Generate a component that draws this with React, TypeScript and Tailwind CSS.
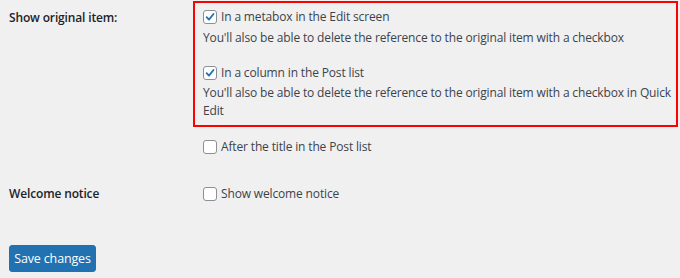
import React from "react";

function Box({ checked }: { checked?: boolean }) {
  return (
    <span className="flex h-[14px] w-[14px] shrink-0 items-center justify-center rounded-[3px] border border-[#8c8f94] bg-white">
      {checked && (
        <svg width="14" height="14" viewBox="0 0 20 20" className="block">
          <path d="M4.4 10.4 L8.3 14.4 L15.8 5" fill="none" stroke="#2271b1" strokeWidth="3" strokeLinecap="round" strokeLinejoin="round" />
        </svg>
      )}
    </span>
  );
}

function Check({ label, checked }: { label: string; checked?: boolean }) {
  return (
    <label className="flex h-[20px] items-center gap-[4px] text-[#3c434a]">
      <Box checked={checked} />
      <span>{label}</span>
    </label>
  );
}

export default function App() {
  return (
    <div
      className="h-[278px] w-[680px] overflow-hidden bg-[#f0f0f1] text-[12px] leading-[18px] tracking-[-0.15px] text-[#3c434a]"
      style={{ fontFamily: '"Segoe UI", "Open Sans", "Noto Sans", sans-serif' }}
    >
      <div className="flex pt-[1px]">
        <div className="w-[193px] shrink-0 pl-[9px] pt-[7px] font-semibold leading-[20px] text-[#1d2327]">
          Show original item:
        </div>
        <div className="flex flex-col">
          <div className="w-[485px] border-2 border-[#ff0000] pb-[5px] pl-[8px] pt-[2px]">
            <div className="pt-[2px]">
              <Check label="In a metabox in the Edit screen" checked />
            </div>
            <p className="mt-[2px]">You'll also be able to delete the reference to the original item with a checkbox</p>
            <div className="mt-[16px]">
              <Check label="In a column in the Post list" checked />
            </div>
            <p className="mt-[1px]">
              You'll also be able to delete the reference to the original item with a checkbox in Quick Edit
            </p>
          </div>
          <div className="mt-[10px] pl-[10px]">
            <Check label="After the title in the Post list" />
          </div>
        </div>
      </div>
      <div className="mt-[27px] flex">
        <div className="w-[193px] shrink-0 pl-[9px] font-semibold leading-[20px] text-[#1d2327]">Welcome notice</div>
        <div className="pl-[10px]">
          <Check label="Show welcome notice" />
        </div>
      </div>
      <div className="mt-[41px] pl-[9px]">
        <button className="h-[27px] w-[87px] rounded-[3px] border border-[#2271b1] bg-[#2271b1] text-[12.5px] tracking-[-0.15px] text-white">
          Save changes
        </button>
      </div>
    </div>
  );
}
